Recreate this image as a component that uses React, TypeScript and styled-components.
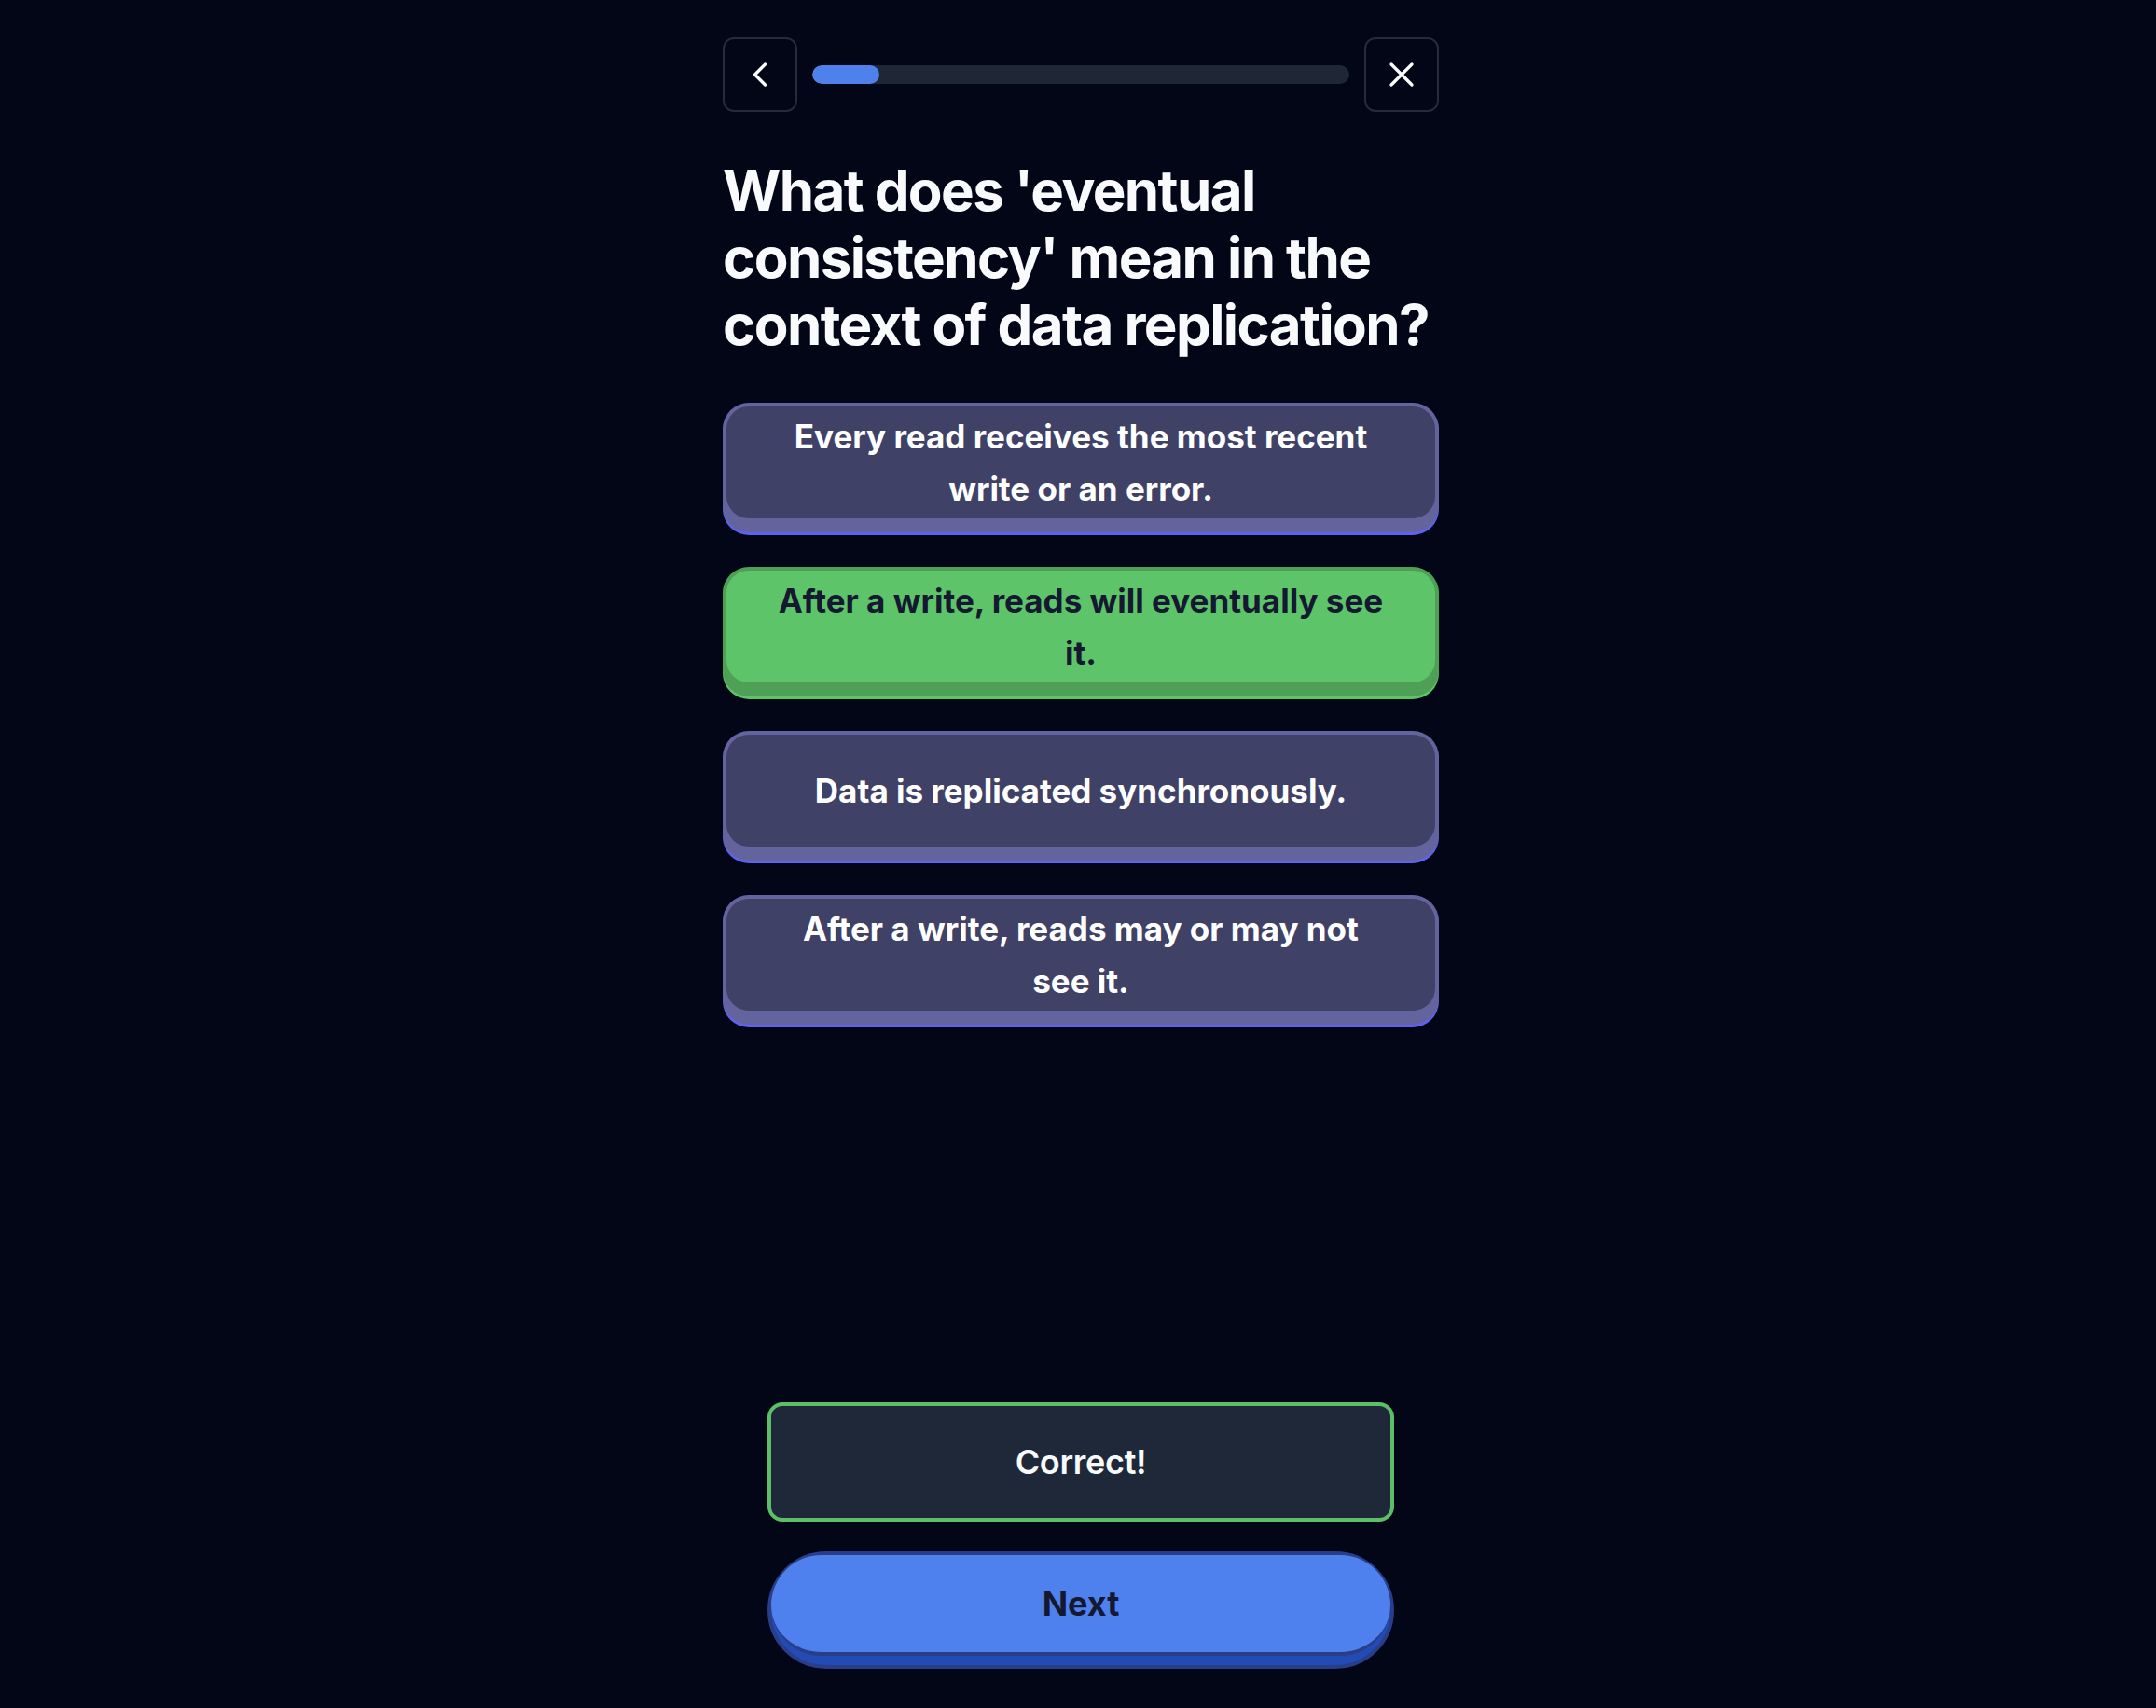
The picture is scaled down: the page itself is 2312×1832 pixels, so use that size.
import React from "react";
import styled, { createGlobalStyle } from "styled-components";
import { ChevronLeft, X } from "lucide-react";

const GlobalStyle = createGlobalStyle`
  html, body {
    margin: 0;
    padding: 0;
    background: #020617;
  }
  body {
    font-family: Inter, "Noto Sans", "Liberation Sans", sans-serif;
    -webkit-font-smoothing: antialiased;
  }
  * { box-sizing: border-box; }
`;

const Page = styled.div`
  min-height: 100vh;
  display: flex;
  justify-content: center;
  padding-left: 6px;
  background: #020617;
`;

const Main = styled.main`
  width: 768px;
  min-height: 100vh;
  display: flex;
  flex-direction: column;
  padding-top: 40px;
`;

const Header = styled.header`
  display: flex;
  align-items: center;
  gap: 16px;
  height: 80px;
`;

const IconButton = styled.button`
  width: 80px;
  height: 80px;
  flex: none;
  display: flex;
  align-items: center;
  justify-content: center;
  background: transparent;
  border: 2px solid #242b3b;
  border-radius: 12px;
  color: #ffffff;
  padding: 0;
  cursor: pointer;
`;

const Track = styled.div`
  flex: 1;
  height: 20px;
  border-radius: 10px;
  background: #1f2737;
  overflow: hidden;
`;

const Fill = styled.div`
  height: 100%;
  border-radius: 10px;
  background: #4f81ed;
`;

const Question = styled.h1`
  margin: 48px -16px 0 0;
  font-family: Inter, "Liberation Sans", sans-serif;
  font-size: 60px;
  line-height: 72px;
  font-weight: 700;
  letter-spacing: -1.6px;
  color: #f8fafc;
`;

const Options = styled.div`
  margin-top: 48px;
  display: flex;
  flex-direction: column;
  gap: 37px;
`;

type Tone = "idle" | "correct";

const palette = {
  idle: { edge: "#63649e", face: "#3f4167", shadow: "#5e62ef", text: "#ffffff" },
  correct: { edge: "#4da055", face: "#5ec46a", shadow: "#5ec46a", text: "#141830" },
};

const OptionButton = styled.button<{ $tone: Tone }>`
  width: 100%;
  display: block;
  border: none;
  padding: 4px 4px 15px;
  border-radius: 28px;
  background: ${(p) => palette[p.$tone].edge};
  box-shadow: 0 3px 0 ${(p) => palette[p.$tone].shadow};
  cursor: pointer;
  font-family: inherit;
`;

const OptionFace = styled.span<{ $tone: Tone }>`
  display: flex;
  align-items: center;
  justify-content: center;
  min-height: 120px;
  padding: 0 52px;
  border-radius: 24px;
  background: ${(p) => palette[p.$tone].face};
  color: ${(p) => palette[p.$tone].text};
  font-family: Inter, "Liberation Sans", sans-serif;
  font-size: 35px;
  line-height: 56px;
  font-weight: 700;
  letter-spacing: 0;
  text-align: center;
`;

const Spacer = styled.div`
  flex: 1;
`;

const Footer = styled.footer`
  display: flex;
  flex-direction: column;
  gap: 32px;
  padding: 0 48px 42px;
`;

const Feedback = styled.div`
  height: 128px;
  display: flex;
  align-items: center;
  justify-content: center;
  background: #1f2839;
  border: 4px solid #5cbf67;
  border-radius: 16px;
  color: #f8fafc;
  font-size: 36px;
  font-weight: 600;
  letter-spacing: -0.3px;
`;

const NextButton = styled.button`
  display: block;
  width: 100%;
  height: 126px;
  padding: 0 0 10px;
  border: 4px solid #2a3d88;
  border-radius: 9999px;
  background: #224bb5;
  cursor: pointer;
  font-family: inherit;
`;

const NextFace = styled.span`
  display: flex;
  align-items: center;
  justify-content: center;
  height: 100%;
  border-bottom: 4px solid #2a3d88;
  border-radius: 9999px;
  background: #4f81ee;
  color: #141830;
  font-family: Inter, "Liberation Sans", sans-serif;
  font-size: 36px;
  font-weight: 700;
`;

const answers: { text: string; tone: Tone }[] = [
  { text: "Every read receives the most recent write or an error.", tone: "idle" },
  { text: "After a write, reads will eventually see it.", tone: "correct" },
  { text: "Data is replicated synchronously.", tone: "idle" },
  { text: "After a write, reads may or may not see it.", tone: "idle" },
];

export default function App() {
  const progress = 1 / 8;
  return (
    <>
      <GlobalStyle />
      <Page>
        <Main>
          <Header>
            <IconButton aria-label="Back">
              <ChevronLeft size={44} strokeWidth={1.8} />
            </IconButton>
            <Track>
              <Fill style={{ width: `${progress * 100}%` }} />
            </Track>
            <IconButton aria-label="Close">
              <X size={44} strokeWidth={1.8} />
            </IconButton>
          </Header>
          <Question>
            What does 'eventual consistency' mean in the context of data replication?
          </Question>
          <Options>
            {answers.map((a) => (
              <OptionButton key={a.text} $tone={a.tone}>
                <OptionFace $tone={a.tone}>{a.text}</OptionFace>
              </OptionButton>
            ))}
          </Options>
          <Spacer />
          <Footer>
            <Feedback>Correct!</Feedback>
            <NextButton>
              <NextFace>Next</NextFace>
            </NextButton>
          </Footer>
        </Main>
      </Page>
    </>
  );
}
